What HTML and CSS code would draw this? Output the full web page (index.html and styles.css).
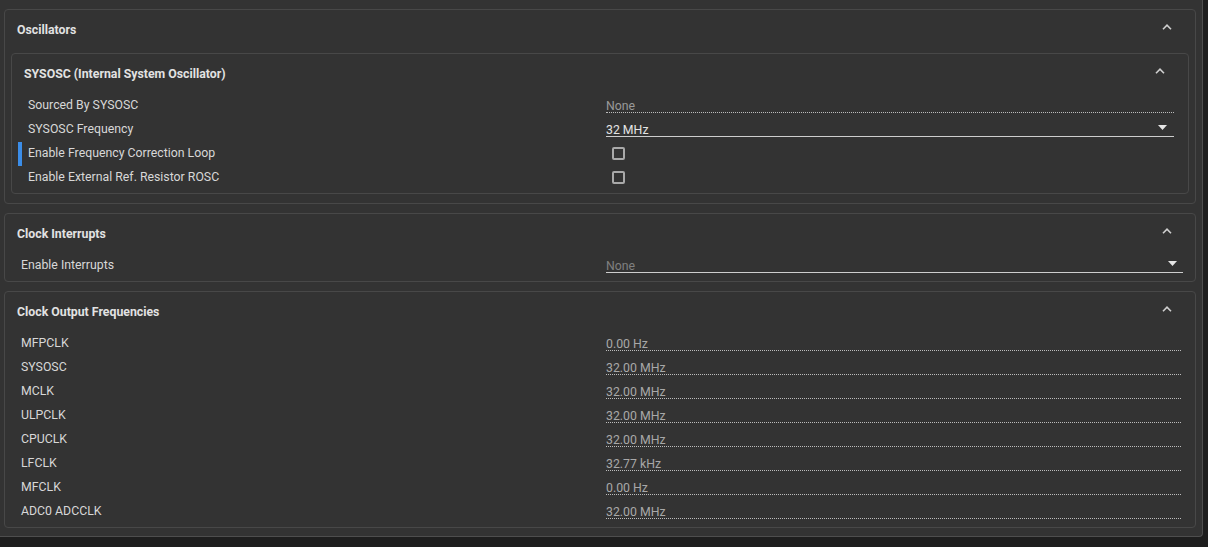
FILE: index.html
```html
<!DOCTYPE html>
<html lang="en">
<head>
<meta charset="utf-8">
<title>Clock configuration</title>
<link rel="stylesheet" href="styles.css">
</head>
<body>
<div class="view">
  <section class="panel">
    <header class="panel-head">
      <span class="panel-title">Oscillators</span>
      <svg class="chevron" width="10" height="6" viewBox="0 0 10 6"><polyline points="1,5.2 5,1.2 9,5.2" /></svg>
    </header>
    <div class="panel-body nested">
      <section class="panel">
        <header class="panel-head">
          <span class="panel-title">SYSOSC (Internal System Oscillator)</span>
          <svg class="chevron" width="10" height="6" viewBox="0 0 10 6"><polyline points="1,5.2 5,1.2 9,5.2" /></svg>
        </header>
        <div class="panel-body">
          <div class="row">
            <span class="label">Sourced By SYSOSC</span>
            <span class="value readonly dim"><span class="text">None</span></span>
          </div>
          <div class="row">
            <span class="label">SYSOSC Frequency</span>
            <span class="value select"><span class="text">32 MHz</span><svg class="caret" width="9" height="5" viewBox="0 0 9 5"><polygon points="0,0 9,0 4.5,5" /></svg></span>
          </div>
          <div class="row focused">
            <span class="label">Enable Frequency Correction Loop</span>
            <span class="value plain"><span class="checkbox"></span></span>
          </div>
          <div class="row">
            <span class="label">Enable External Ref. Resistor ROSC</span>
            <span class="value plain"><span class="checkbox"></span></span>
          </div>
        </div>
      </section>
    </div>
  </section>

  <section class="panel">
    <header class="panel-head">
      <span class="panel-title">Clock Interrupts</span>
      <svg class="chevron" width="10" height="6" viewBox="0 0 10 6"><polyline points="1,5.2 5,1.2 9,5.2" /></svg>
    </header>
    <div class="panel-body">
      <div class="row">
        <span class="label">Enable Interrupts</span>
        <span class="value select disabled"><span class="text">None</span><svg class="caret" width="9" height="5" viewBox="0 0 9 5"><polygon points="0,0 9,0 4.5,5" /></svg></span>
      </div>
    </div>
  </section>

  <section class="panel">
    <header class="panel-head">
      <span class="panel-title">Clock Output Frequencies</span>
      <svg class="chevron" width="10" height="6" viewBox="0 0 10 6"><polyline points="1,5.2 5,1.2 9,5.2" /></svg>
    </header>
    <div class="panel-body">
      <div class="row"><span class="label">MFPCLK</span><span class="value readonly"><span class="text">0.00 Hz</span></span></div>
      <div class="row"><span class="label">SYSOSC</span><span class="value readonly"><span class="text">32.00 MHz</span></span></div>
      <div class="row"><span class="label">MCLK</span><span class="value readonly"><span class="text">32.00 MHz</span></span></div>
      <div class="row"><span class="label">ULPCLK</span><span class="value readonly"><span class="text">32.00 MHz</span></span></div>
      <div class="row"><span class="label">CPUCLK</span><span class="value readonly"><span class="text">32.00 MHz</span></span></div>
      <div class="row"><span class="label">LFCLK</span><span class="value readonly"><span class="text">32.77 kHz</span></span></div>
      <div class="row"><span class="label">MFCLK</span><span class="value readonly"><span class="text">0.00 Hz</span></span></div>
      <div class="row"><span class="label">ADC0 ADCCLK</span><span class="value readonly"><span class="text">32.00 MHz</span></span></div>
    </div>
  </section>
</div>
</body>
</html>
```

FILE: styles.css
```css
* {
  box-sizing: border-box;
}

html, body {
  margin: 0;
  padding: 0;
  background: #1e1e1e;
}

body {
  width: 1208px;
  height: 547px;
  overflow: hidden;
  font-family: Roboto, "Liberation Sans", sans-serif;
  font-size: 12.3px;
  color: #d6d6d6;
}

.view {
  width: 1203px;
  height: 537px;
  background: #333333;
  border-right: 1px solid #4e4e4e;
  border-bottom: 1px solid #4e4e4e;
  border-bottom-right-radius: 4px;
  padding: 9px 6px 0 4px;
  display: flex;
  flex-direction: column;
  gap: 9px;
}

.panel {
  border: 1px solid #484848;
  border-radius: 4px;
  background: #333333;
}

.panel-head {
  height: 40px;
  display: flex;
  align-items: center;
  justify-content: space-between;
  padding: 0 23px 0 12px;
}

.panel-title {
  font-weight: 700;
  color: #e2e2e2;
}

.chevron {
  margin-top: -7px;
  fill: none;
  stroke: #cfcfcf;
  stroke-width: 1.6;
}

.panel-body {
  padding: 0 6px 3px 6px;
}

.panel-body.nested {
  padding: 3px 6px 9px 6px;
}

.row {
  height: 24px;
  display: grid;
  grid-template-columns: 50% 1fr;
  border-left: 4px solid transparent;
  padding: 0 8px 0 6px;
}

.row.focused {
  border-left-color: #3b8de8;
}

.label {
  line-height: 22px;
  white-space: nowrap;
  color: #d8d8d8;
}

.value {
  margin-left: 5px;
  height: 19px;
  padding-bottom: 1px;
  display: flex;
  align-items: flex-end;
  justify-content: space-between;
  white-space: nowrap;
}

.value .text {
  line-height: 9px;
}

.value.readonly {
  border-bottom: 1px dotted #bdbdbd;
  color: #a8a8a8;
}

.value.readonly.dim {
  color: #9a9a9a;
}

.value.select {
  border-bottom: 1px solid #cdcdcd;
  color: #e4e4e4;
  padding-right: 7px;
}

.value.select.disabled {
  color: #808080;
  padding-right: 6px;
  margin-right: -2px;
}

.caret {
  align-self: flex-start;
  margin-top: 7px;
  fill: #e6e6e6;
}

.value.plain {
  height: 24px;
  padding-bottom: 0;
  align-items: flex-start;
}

.checkbox {
  width: 13px;
  height: 13px;
  margin: 5px 0 0 6px;
  border: 2px solid #a9a9a9;
  border-radius: 2px;
}
```
